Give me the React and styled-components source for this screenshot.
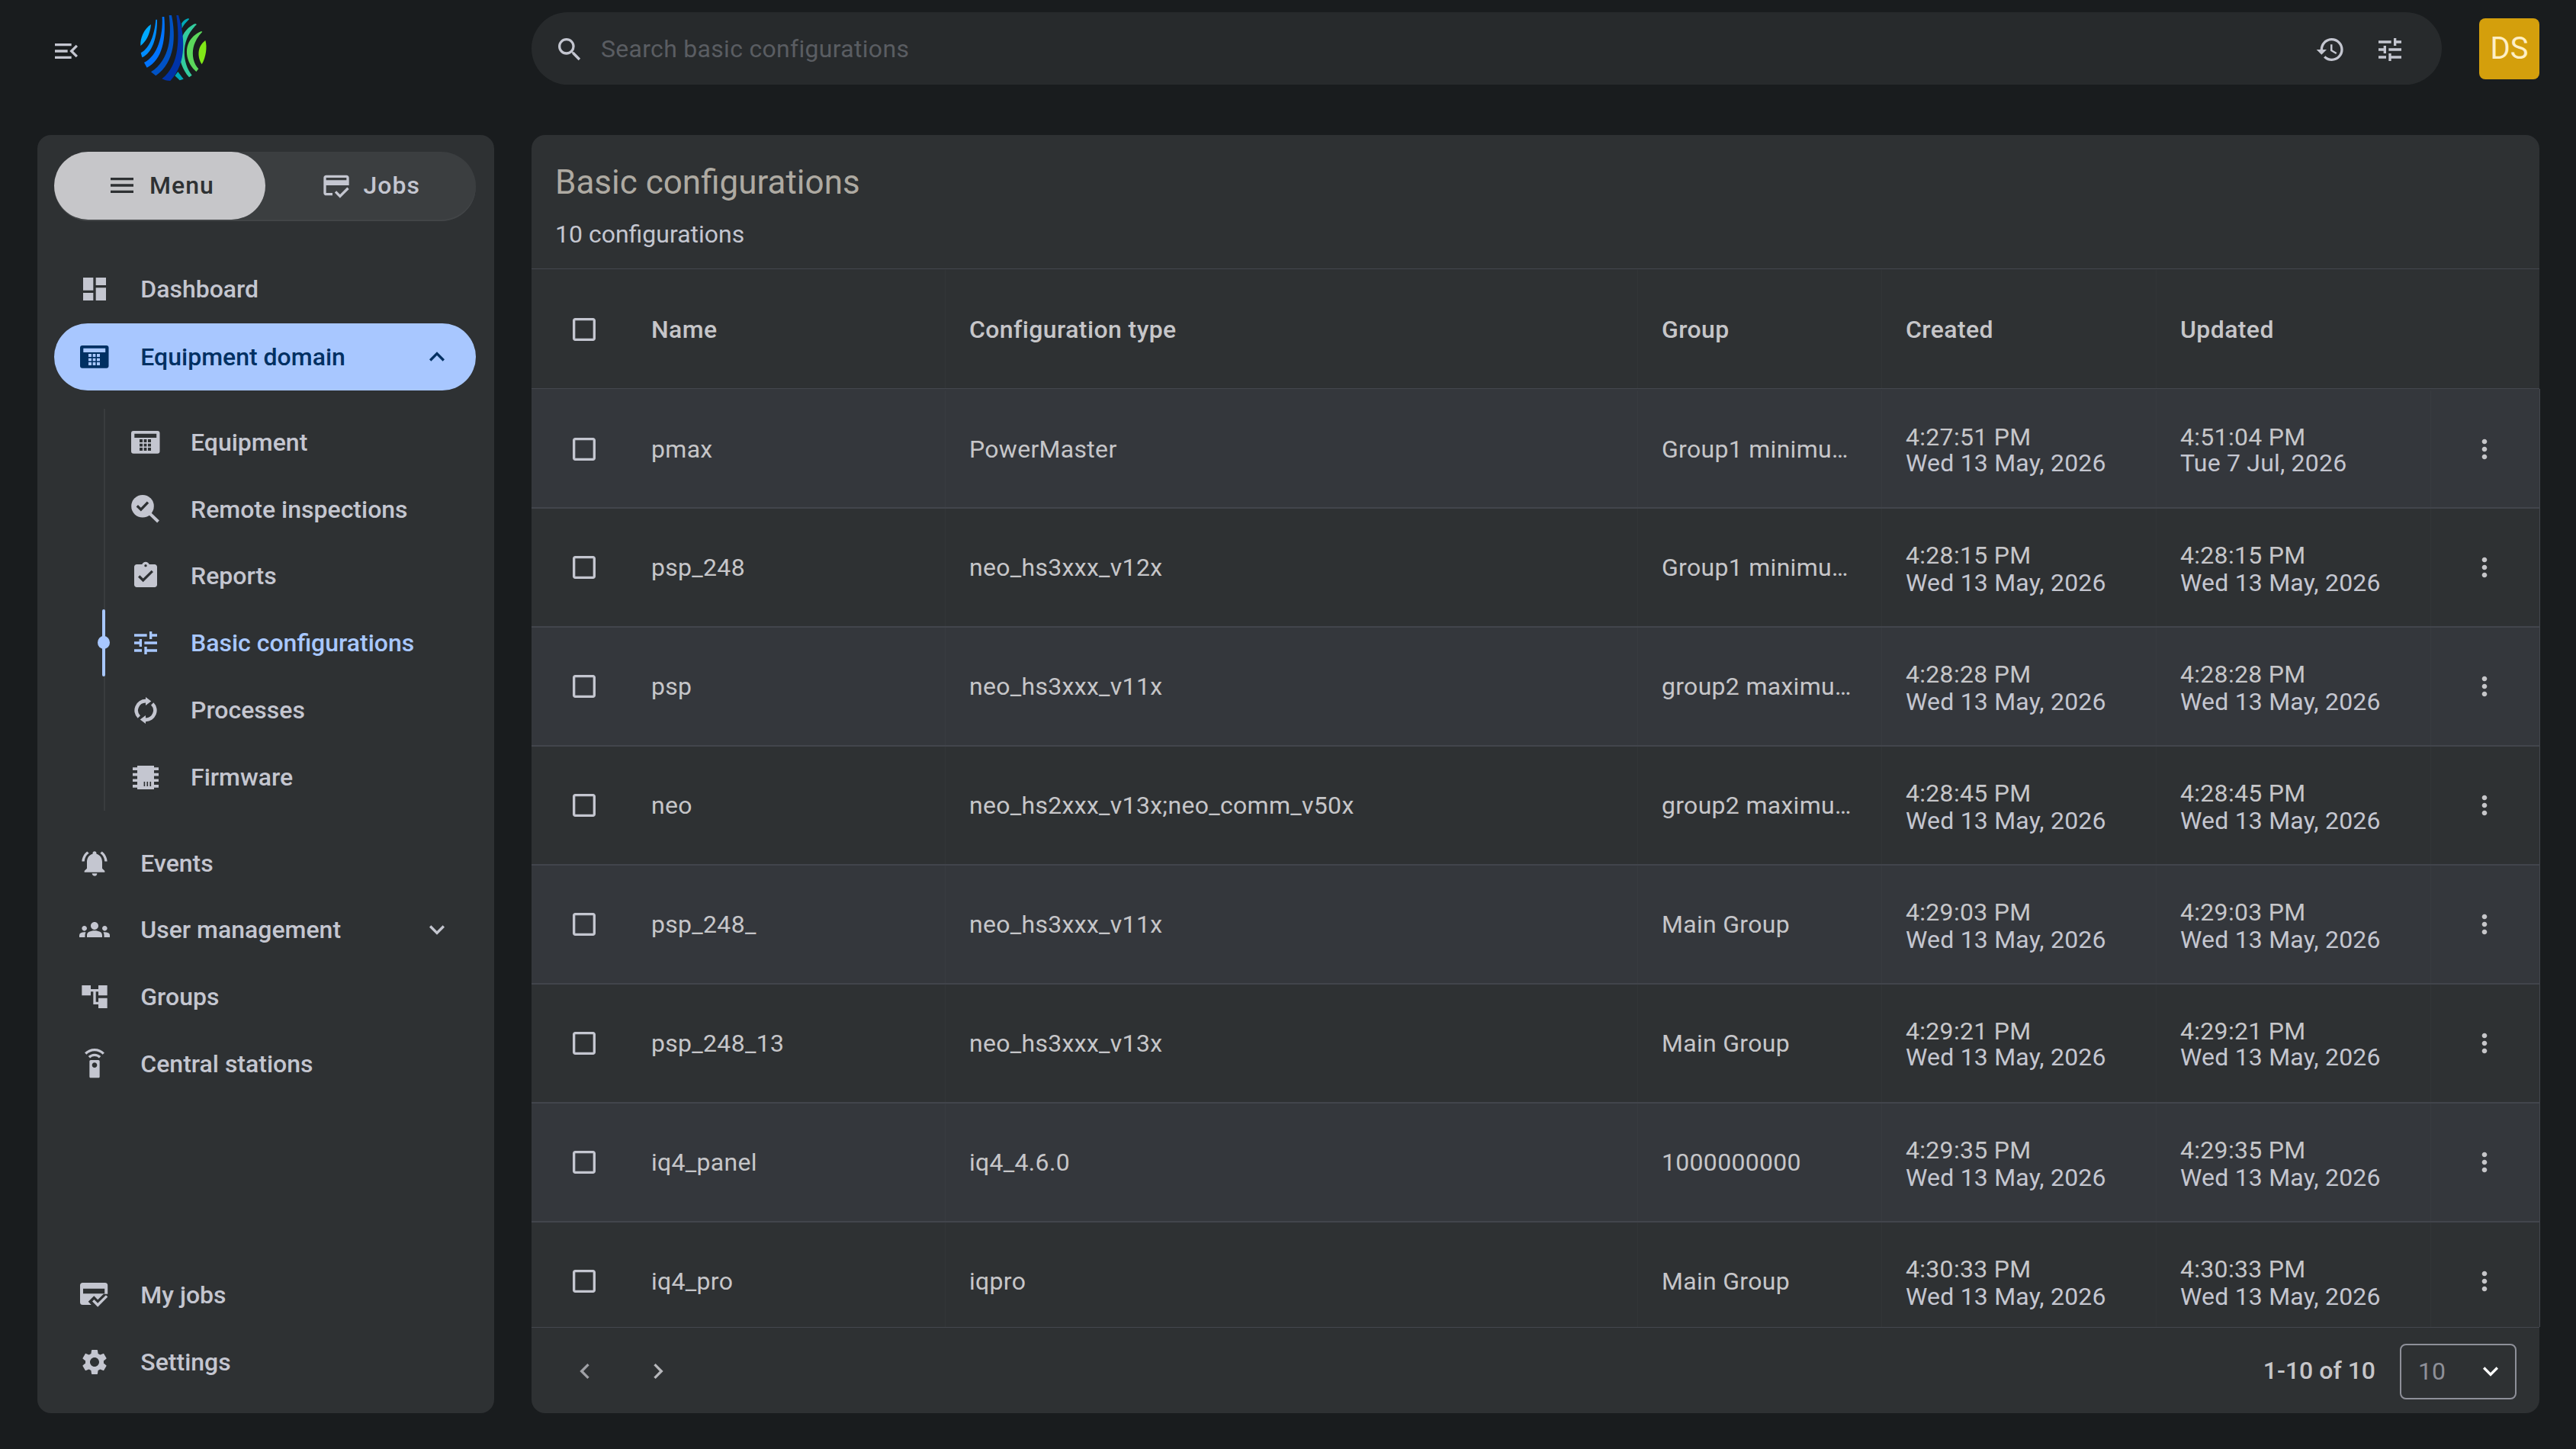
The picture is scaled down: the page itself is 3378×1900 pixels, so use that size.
import React from 'react';
import styled, {createGlobalStyle, css} from 'styled-components';
import {
    MdAccountTree,
    MdAssignmentTurnedIn,
    MdCheckBoxOutlineBlank,
    MdChevronLeft,
    MdChevronRight,
    MdDashboard,
    MdExpandLess,
    MdExpandMore,
    MdGroups,
    MdHistory,
    MdMenu,
    MdMenuOpen,
    MdMoreVert,
    MdNotificationsActive,
    MdOutlineCreditScore,
    MdSearch,
    MdSettings,
    MdSettingsRemote,
    MdTune
} from 'react-icons/md';

const GlobalStyle = createGlobalStyle`
  * {
    box-sizing: border-box;
  }

  body {
    margin: 0;
    background: #191c1e;
    font-family: Roboto, "Liberation Sans", sans-serif;
    font-size: 32px;
    color: #c6c6c9;
  }
`;

const Page = styled.div`
  display: flex;
  flex-direction: column;
  width: 3378px;
  height: 1900px;
  overflow: hidden;
  background: #191c1e;

  svg {
    flex: none;
  }
`;

const TopBar = styled.header`
  display: flex;
  align-items: center;
  height: 127px;
  margin-bottom: 50px;
  padding: 0 48px 0 67px;
  color: #c4c6d0;
`;

const MenuToggle = styled.div`
  display: flex;
  width: 103px;
  padding-top: 6px;
`;

const LogoBox = styled.div`
  display: flex;
  width: 527px;
  padding-top: 3px;
`;

const SearchBar = styled.div`
  display: flex;
  align-items: center;
  width: 2505px;
  height: 95px;
  padding: 2px 48px 0 30px;
  border-radius: 48px;
  background: #272a2c;
`;

const SearchInput = styled.div`
  flex: 1;
  padding: 0 0 2px 21px;
  color: #5a5d62;
  letter-spacing: 0.3px;
`;

const SearchActions = styled.div`
  display: flex;
  gap: 38px;
`;

const Avatar = styled.div`
  display: flex;
  align-items: center;
  justify-content: center;
  width: 79px;
  height: 80px;
  margin-left: auto;
  padding: 0 0 1px;
  border-radius: 8px;
  background: #d49f0c;
  color: #ffefc6;
  font-size: 40px;
`;

const Content = styled.div`
  display: flex;
  gap: 49px;
  height: 1676px;
  padding-left: 49px;
`;

const Sidebar = styled.nav`
  display: flex;
  flex-direction: column;
  width: 599px;
  padding: 22px 24px 23.5px 22px;
  border-radius: 18px;
  background: #2e3133;
`;

const Tabs = styled.div`
  display: flex;
  align-items: flex-start;
  height: 91px;
  margin-bottom: 45.5px;
  border-radius: 46px;
  background: #3b3e40;
  box-shadow: inset 0 -2px 0 #424547;
`;

const Tab = styled.div`
  display: flex;
  align-items: center;
  gap: 16px;
  width: 50%;
  height: 89px;
  padding: 0 0 1px ${props => props.$active ? '69px' : '73px'};
  border-radius: 45px;
  background: ${props => props.$active ? '#c6c6c9' : 'transparent'};
  color: ${props => props.$active ? '#2e3133' : '#c4c6d0'};
  font-weight: 500;
  letter-spacing: 1px;
`;

const NavItem = styled.div`
  display: flex;
  align-items: center;
  flex: none;
  gap: 40.5px;
  height: 87.7px;
  padding: 0 31.5px 0 32.8px;
  border-radius: 44px;
  color: #c4c6d0;
  font-weight: 500;

  ${props => props.$active && css`
    margin-top: 1px;
    background: #a8c7ff;
    color: #003062;
  `}
`;

const NavLabel = styled.div`
  flex: 1;
  white-space: nowrap;
`;

const IconSlot = styled.div`
  display: flex;
  align-items: center;
  justify-content: center;
  flex: none;
  width: 40px;
  height: 40px;
`;

const SubNav = styled.div`
  margin: 24px 0 24.8px 65px;
  border-left: 2px solid #393c3e;
`;

const SubNavItem = styled.div`
  position: relative;
  display: flex;
  align-items: center;
  gap: 39.5px;
  height: 87.85px;
  padding-left: 32.5px;
  color: ${props => props.$active ? '#a8c7ff' : '#c4c6d0'};
  font-weight: 500;
  white-space: nowrap;

  ${props => props.$active && css`
    &::before {
      content: '';
      position: absolute;
      left: -4px;
      top: 0;
      width: 4px;
      height: 88px;
      border-radius: 2px;
      background: #a8c7ff;
    }

    &::after {
      content: '';
      position: absolute;
      left: -10px;
      top: 35px;
      width: 16px;
      height: 17px;
      border-radius: 50%;
      background: #a8c7ff;
    }
  `}
`;

const NavBottom = styled.div`
  margin-top: auto;
`;

const Panel = styled.main`
  display: flex;
  flex-direction: column;
  width: 2633px;
  border-radius: 18px;
  background: #2e3133;
`;

const PanelHeader = styled.div`
  height: 176px;
  padding: 36px 31px 0;
  border-bottom: 1px solid #44474e;
`;

const Title = styled.h1`
  margin: 0 0 23px;
  color: #aeaaa2;
  font-size: 44px;
  font-weight: 400;
  line-height: 52px;
`;

const Subtitle = styled.div`
  color: #c4c6d0;
  line-height: 38px;
`;

const columns = '126px 416px 908px 320px 360px 360px 1fr';

const HeadRow = styled.div`
  display: grid;
  grid-template-columns: ${columns};
  height: 157px;
  padding-top: 1px;
  border-bottom: 1px solid #44474e;
  font-weight: 500;
  letter-spacing: 0.4px;
`;

const TableBody = styled.div`
  height: 1230px;
  margin-right: -1px;
  overflow: hidden;
`;

const Row = styled.div`
  display: grid;
  grid-template-columns: ${columns};
  height: 156px;
  border-right: 1px solid #44474e;
  border-bottom: 2px solid #42454c;
  letter-spacing: 0.3px;

  &:nth-child(odd) {
    background: #34373c;
  }

  &:first-child {
    height: 157px;
    padding-top: 2px;
  }
`;

const Cell = styled.div`
  display: flex;
  align-items: center;
  min-width: 0;
  padding-left: 31px;
  white-space: nowrap;

  ${props => props.$divided && css`
    border-left: 1px solid rgba(255, 255, 255, 0.025);
  `}
`;

const CheckCell = styled(Cell)`
  padding-left: 48.5px;
  color: #c4c6d0;
`;

const ActionCell = styled(Cell)`
  padding-left: 50px;
`;

const Stamp = styled.div`
  padding-top: ${props => props.$tight ? '2px' : '3px'};
  line-height: ${props => props.$tight ? '34px' : '36px'};
`;

const StampDate = styled.div`
  color: #c4c6d0;
  letter-spacing: 0.2px;
`;

const Footer = styled.footer`
  display: flex;
  align-items: center;
  height: 113px;
  padding: 0 30px 0 50px;
  border-top: 1px solid #44474e;
`;

const PagerButton = styled.div`
  display: flex;
  width: 96px;
  padding-top: 1px;
  color: ${props => props.$disabled ? '#a0a1a6' : '#b6b7bb'};
`;

const Range = styled.div`
  margin-left: auto;
  margin-right: 32px;
  font-weight: 500;
`;

const PageSize = styled.div`
  display: flex;
  align-items: center;
  justify-content: space-between;
  width: 153px;
  height: 73px;
  margin-top: 2px;
  padding: 0 12px 0 22px;
  border: 2px solid #8e9099;
  border-radius: 8px;
  color: #8e9099;
`;

const Caret = styled(MdExpandMore)`
  color: #fff;
`;

const Logo = () => (
    <svg width="120" height="110" viewBox="0 0 360 330">
        <path fill="#00aaff" d="M84 66C58 82 40 120 43 150C62 136 80 108 84 66Z"/>
        <path fill="#008cff" d="M103 47H108C109 120 88 178 49 196L44 178C80 158 98 105 103 47Z"/>
        <path fill="#0073ff" d="M128 36H136C143 120 130 205 68 236L57 216C110 190 132 110 128 36Z"/>
        <path fill="#0052c4" d="M155 30H165C182 110 180 215 103 268L84 253C160 205 165 110 155 30Z"/>
        <path fill="#00a8b8" d="M204 62C212 50 222 44 232 42L234 46C222 58 212 68 206 82Z"/>
        <path fill="#00a8b8" d="M190 252L212 281L197 286L178 268Z"/>
        <path fill="#33cc9e" d="M264 66L258 63C190 90 170 200 234 274L245 266C205 215 200 125 264 66Z"/>
        <path fill="#0033a8" d="M184 30H192C216 110 228 215 160 288C146 288 136 285 127 280C200 225 195 110 184 30Z"/>
        <path fill="#5bd75b" d="M286 95L282 93C215 120 205 200 262 252L271 241C238 205 240 140 286 95Z"/>
        <path fill="#80e817" d="M298 129C262 155 268 200 284 223C300 195 306 155 298 129Z"/>
    </svg>
);

const KeypadIcon = () => (
    <svg width="38" height="30" viewBox="0 0 38 30">
        <path
            fill="currentColor"
            fillRule="evenodd"
            d="M3 0H34.5A3 3 0 0 1 37.5 3V26.7A3 3 0 0 1 34.5 29.7H3A3 3 0 0 1 0 26.7V3A3 3 0 0 1 3 0ZM4.3 3.7V9H33.2V3.7ZM11 11V15H15V11ZM16.6 11V15H20.4V11ZM22 11V15H26V11ZM11 16.7V20.4H15V16.7ZM16.6 16.7V20.4H20.4V16.7ZM22 16.7V20.4H26V16.7ZM11 22V26H15V22ZM16.6 22V26H20.4V22ZM22 22V26H26V22Z"
        />
    </svg>
);

const InspectIcon = () => (
    <svg width="37" height="37" viewBox="0 0 37 37" fill="none">
        <circle cx="15" cy="14.8" r="14.8" fill="currentColor"/>
        <path d="M23.5 23.5L35.5 35" stroke="currentColor" strokeWidth="4"/>
        <path d="M7.8 14.3L12.8 19.2L22 9.6" stroke="#2e3133" strokeWidth="3.4"/>
    </svg>
);

const CycleIcon = () => (
    <svg width="30" height="35" viewBox="0 0 30 35" fill="none">
        <path d="M15 5.2A12.3 12.3 0 0 0 6.3 26.2M23.7 8.8A12.3 12.3 0 0 1 15 29.8" stroke="currentColor" strokeWidth="4.7"/>
        <path d="M15 0L22.3 5.6L15 11ZM15 35L7.7 29.4L15 24Z" fill="currentColor"/>
    </svg>
);

const ChipIcon = () => (
    <svg width="34" height="31" viewBox="0 0 34 31">
        <path
            fill="currentColor"
            fillRule="evenodd"
            d="M6 0H28V2.3H34V6H28V9.8H34V13.4H28V17.4H34V21H28V25H34V28.7H28V31H6V28.7H0V25H6V21H0V17.4H6V13.4H0V9.8H6V6H0V2.3H6ZM14.6 21V27H16.2V21ZM18.5 21V27H20.1V21ZM22.5 21V27H24.1V21Z"
        />
    </svg>
);

const MyJobsIcon = () => (
    <svg width="37" height="32" viewBox="0 0 37 32">
        <path
            fill="currentColor"
            fillRule="evenodd"
            d="M3.5 0H32.7A3.5 3.5 0 0 1 36.2 3.5V14.7H30.8L23.2 22.3L18.3 17.3L10.7 24.7L14.7 29H3.5A3.5 3.5 0 0 1 0 25.5V3.5A3.5 3.5 0 0 1 3.5 0ZM4 7.7V14.3H32.2V7.7Z"
        />
        <path fill="currentColor" d="M16 24.4L18.4 22L23.2 26.8L33.9 16.2L36.3 18.6L23.2 31.8Z"/>
    </svg>
);

const configurations = [
    {name: 'pmax', type: 'PowerMaster', group: 'Group1 minimu…', created: ['4:27:51 PM', 'Wed 13 May, 2026'], updated: ['4:51:04 PM', 'Tue 7 Jul, 2026'], tight: true},
    {name: 'psp_248', type: 'neo_hs3xxx_v12x', group: 'Group1 minimu…', created: ['4:28:15 PM', 'Wed 13 May, 2026'], updated: ['4:28:15 PM', 'Wed 13 May, 2026']},
    {name: 'psp', type: 'neo_hs3xxx_v11x', group: 'group2 maximu…', created: ['4:28:28 PM', 'Wed 13 May, 2026'], updated: ['4:28:28 PM', 'Wed 13 May, 2026']},
    {name: 'neo', type: 'neo_hs2xxx_v13x;neo_comm_v50x', group: 'group2 maximu…', created: ['4:28:45 PM', 'Wed 13 May, 2026'], updated: ['4:28:45 PM', 'Wed 13 May, 2026']},
    {name: 'psp_248_', type: 'neo_hs3xxx_v11x', group: 'Main Group', created: ['4:29:03 PM', 'Wed 13 May, 2026'], updated: ['4:29:03 PM', 'Wed 13 May, 2026']},
    {name: 'psp_248_13', type: 'neo_hs3xxx_v13x', group: 'Main Group', created: ['4:29:21 PM', 'Wed 13 May, 2026'], updated: ['4:29:21 PM', 'Wed 13 May, 2026'], tight: true},
    {name: 'iq4_panel', type: 'iq4_4.6.0', group: '1000000000', created: ['4:29:35 PM', 'Wed 13 May, 2026'], updated: ['4:29:35 PM', 'Wed 13 May, 2026']},
    {name: 'iq4_pro', type: 'iqpro', group: 'Main Group', created: ['4:30:33 PM', 'Wed 13 May, 2026'], updated: ['4:30:33 PM', 'Wed 13 May, 2026']}
];

const equipmentItems = [
    {label: 'Equipment', icon: <KeypadIcon/>},
    {label: 'Remote inspections', icon: <InspectIcon/>},
    {label: 'Reports', icon: <MdAssignmentTurnedIn size={40}/>},
    {label: 'Basic configurations', icon: <MdTune size={40}/>, active: true},
    {label: 'Processes', icon: <CycleIcon/>},
    {label: 'Firmware', icon: <ChipIcon/>}
];

const NavRow = ({icon, label, active, trailing}) => (
    <NavItem $active={active}>
        <IconSlot>{icon}</IconSlot>
        <NavLabel>{label}</NavLabel>
        {trailing}
    </NavItem>
);

const TimeStamp = ({value, tight}) => (
    <Stamp $tight={tight}>
        <div>{value[0]}</div>
        <StampDate>{value[1]}</StampDate>
    </Stamp>
);

const ConfigurationRow = ({item}) => (
    <Row>
        <CheckCell><MdCheckBoxOutlineBlank size={40}/></CheckCell>
        <Cell>{item.name}</Cell>
        <Cell $divided>{item.type}</Cell>
        <Cell $divided>{item.group}</Cell>
        <Cell $divided><TimeStamp value={item.created} tight={item.tight}/></Cell>
        <Cell $divided><TimeStamp value={item.updated} tight={item.tight}/></Cell>
        <ActionCell $divided><MdMoreVert size={40}/></ActionCell>
    </Row>
);

export default function App() {
    return (
        <Page>
            <GlobalStyle/>
            <TopBar>
                <MenuToggle><MdMenuOpen size={40}/></MenuToggle>
                <LogoBox><Logo/></LogoBox>
                <SearchBar>
                    <MdSearch size={40}/>
                    <SearchInput>Search basic configurations</SearchInput>
                    <SearchActions>
                        <MdHistory size={40}/>
                        <MdTune size={40}/>
                    </SearchActions>
                </SearchBar>
                <Avatar>DS</Avatar>
            </TopBar>
            <Content>
                <Sidebar>
                    <Tabs>
                        <Tab $active><MdMenu size={40}/>Menu</Tab>
                        <Tab><MdOutlineCreditScore size={40}/>Jobs</Tab>
                    </Tabs>
                    <NavRow icon={<MdDashboard size={40}/>} label="Dashboard"/>
                    <NavRow active icon={<KeypadIcon/>} label="Equipment domain" trailing={<MdExpandLess size={40}/>}/>
                    <SubNav>
                        {equipmentItems.map(item => (
                            <SubNavItem key={item.label} $active={item.active}>
                                <IconSlot>{item.icon}</IconSlot>
                                {item.label}
                            </SubNavItem>
                        ))}
                    </SubNav>
                    <NavRow icon={<MdNotificationsActive size={40}/>} label="Events"/>
                    <NavRow icon={<MdGroups size={40}/>} label="User management" trailing={<MdExpandMore size={40}/>}/>
                    <NavRow icon={<MdAccountTree size={40}/>} label="Groups"/>
                    <NavRow icon={<MdSettingsRemote size={40}/>} label="Central stations"/>
                    <NavBottom>
                        <NavRow icon={<MyJobsIcon/>} label="My jobs"/>
                        <NavRow icon={<MdSettings size={40}/>} label="Settings"/>
                    </NavBottom>
                </Sidebar>
                <Panel>
                    <PanelHeader>
                        <Title>Basic configurations</Title>
                        <Subtitle>10 configurations</Subtitle>
                    </PanelHeader>
                    <HeadRow>
                        <CheckCell><MdCheckBoxOutlineBlank size={40}/></CheckCell>
                        <Cell>Name</Cell>
                        <Cell $divided>Configuration type</Cell>
                        <Cell $divided>Group</Cell>
                        <Cell $divided>Created</Cell>
                        <Cell $divided>Updated</Cell>
                        <Cell/>
                    </HeadRow>
                    <TableBody>
                        {configurations.map(item => (
                            <ConfigurationRow key={item.name} item={item}/>
                        ))}
                    </TableBody>
                    <Footer>
                        <PagerButton $disabled><MdChevronLeft size={40}/></PagerButton>
                        <PagerButton><MdChevronRight size={40}/></PagerButton>
                        <Range>1-10 of 10</Range>
                        <PageSize>10<Caret size={40}/></PageSize>
                    </Footer>
                </Panel>
            </Content>
        </Page>
    );
}
